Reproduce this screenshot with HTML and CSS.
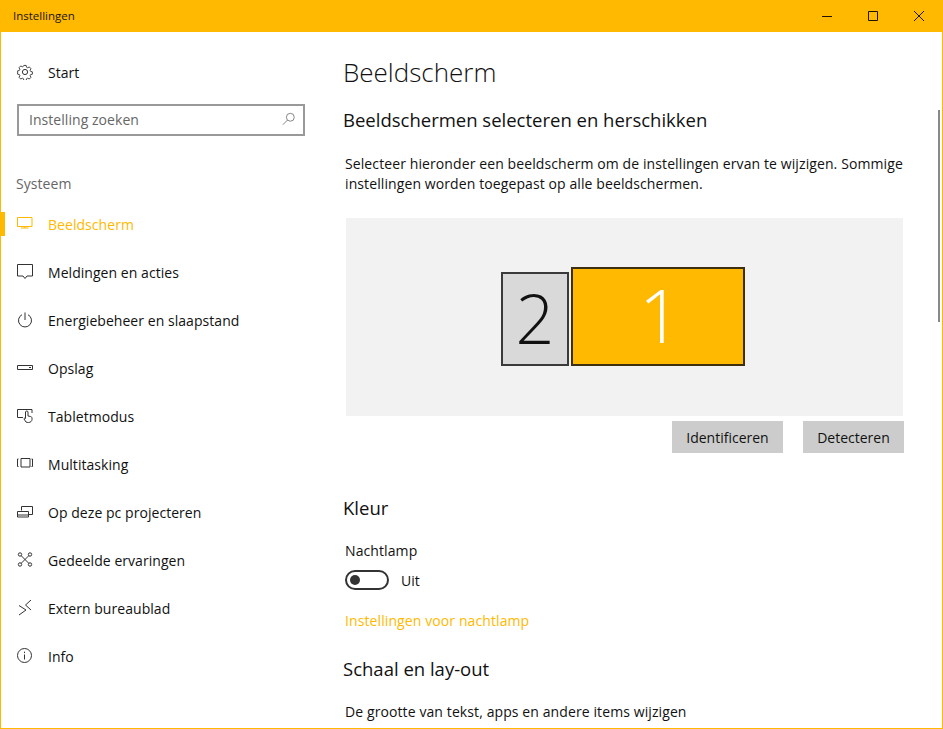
FILE: index.html
```html
<!DOCTYPE html>
<html lang="nl">
<head>
<meta charset="utf-8">
<title>Instellingen</title>
<link rel="stylesheet" href="styles.css">
</head>
<body>
<div class="window">
  <header class="titlebar">
    <span class="title">Instellingen</span>
    <div class="controls">
      <svg class="ctl" viewBox="0 0 46 32"><path d="M18 16.5h10"/></svg>
      <svg class="ctl" viewBox="0 0 46 32"><path d="M18.500 11.500h9v9h-9z"/></svg>
      <svg class="ctl" viewBox="0 0 46 32"><path d="M18 11l10 10M28 11L18 21"/></svg>
    </div>
  </header>
  <div class="content">
    <aside class="sidebar">
      <a class="home">
        <svg class="icon" viewBox="0 0 16 16"><circle cx="8" cy="8" r="2.600"/><path d="M6.700.7h2.600l.4 2 1.200.6 1.900-.9 1.800 1.900-.9 1.800.5 1.200 2 .5v2.600l-2 .5-.5 1.200.9 1.800-1.800 1.900-1.900-.9-1.200.6-.4 2H6.700l-.4-2-1.200-.6-1.900.9-1.800-1.900.9-1.800-.5-1.200-2-.5V6.700l2-.5.5-1.200-.9-1.800 1.800-1.900 1.900.9 1.200-.6z" transform="translate(.8 .8) scale(.9)"/></svg>
        <span>Start</span>
      </a>
      <div class="search">
        <span>Instelling zoeken</span>
        <svg class="search-icon" viewBox="0 0 16 16"><circle cx="9.500" cy="6" r="4.500"/><path d="M6.300 9.200L1 14.500"/></svg>
      </div>
      <div class="group">Systeem</div>
      <nav class="nav">
        <a class="item active">
          <svg class="icon" viewBox="0 0 16 16"><path d="M.5 1.500h14.500v9H.5zM7.750 10.500v1.500M4 12h7.500"/></svg>
          <span>Beeldscherm</span>
        </a>
        <a class="item">
          <svg class="icon" viewBox="0 0 16 16"><path d="M.5.5h15v11.500h-5.500L8 14.500 6 12H.5z"/></svg>
          <span>Meldingen en acties</span>
        </a>
        <a class="item">
          <svg class="icon" viewBox="0 0 16 16"><path d="M8 .5v7.500M5 2.700a6.500 6.500 0 1 0 6 0"/></svg>
          <span>Energiebeheer en slaapstand</span>
        </a>
        <a class="item">
          <svg class="icon" viewBox="0 0 16 16"><path d="M.5 5.500h15v4H.5zM12 7.500h2"/></svg>
          <span>Opslag</span>
        </a>
        <a class="item">
          <svg class="icon" viewBox="0 0 16 16"><path d="M6 9.500H.5v-8h14.500v3.500M9 14l-2-3c0-1 1-1.200 1.500-.5V4c0-1.300 2.500-1.300 2.500 0v4l2.500.5c1 .2 1.500.8 1.500 1.700v1.300c0 1.500-1.500 3-3.500 3-1 0-1.800-.2-2.500-.5z"/></svg>
          <span>Tabletmodus</span>
        </a>
        <a class="item">
          <svg class="icon" viewBox="0 0 16 16"><path d="M4 2.500h9v8.500H4zM1.500 3H.5v7.500h1M14.500 3h1v7.500h-1"/></svg>
          <span>Multitasking</span>
        </a>
        <a class="item">
          <svg class="icon" viewBox="0 0 16 16"><path d="M4.500 6.500V2.500h11v8h-4M.5 7.500h11v5.500H.5zM.5 11h11"/></svg>
          <span>Op deze pc projecteren</span>
        </a>
        <a class="item">
          <svg class="icon" viewBox="0 0 16 16"><circle cx="3" cy="2.500" r="1.700"/><circle cx="13" cy="2.500" r="1.700"/><circle cx="3" cy="12.500" r="1.700"/><circle cx="13" cy="12.500" r="1.700"/><path d="M4.200 3.700l7.600 7.600M11.800 3.700l-7.600 7.600"/></svg>
          <span>Gedeelde ervaringen</span>
        </a>
        <a class="item">
          <svg class="icon" viewBox="0 0 16 16"><path d="M2 5.500l7 4.500-7 5M14 0L8.500 5l5.500 5"/></svg>
          <span>Extern bureaublad</span>
        </a>
        <a class="item">
          <svg class="icon" viewBox="0 0 16 16"><circle cx="7.500" cy="7.500" r="7"/><path d="M7.500 6.500v5M7.500 3.700v1.400"/></svg>
          <span>Info</span>
        </a>
      </nav>
    </aside>
    <main class="main">
      <h1>Beeldscherm</h1>
      <h2 class="sub-first">Beeldschermen selecteren en herschikken</h2>
      <p class="intro">Selecteer hieronder een beeldscherm om de instellingen ervan te wijzigen. Sommige instellingen worden toegepast op alle beeldschermen.</p>
      <div class="panel">
        <div class="mon mon2">2</div>
        <div class="mon mon1">1</div>
      </div>
      <div class="buttons">
        <button class="btn btn-id">Identificeren</button>
        <button class="btn btn-det">Detecteren</button>
      </div>
      <h2 class="kleur">Kleur</h2>
      <div class="label">Nachtlamp</div>
      <div class="toggle-row">
        <span class="toggle"><span class="knob"></span></span>
        <span>Uit</span>
      </div>
      <a class="link">Instellingen voor nachtlamp</a>
      <h2 class="schaal">Schaal en lay-out</h2>
      <div class="label last">De grootte van tekst, apps en andere items wijzigen</div>
    </main>
    <div class="scrollbar"></div>
  </div>
</div>
</body>
</html>
```
FILE: styles.css
```css
* { box-sizing: border-box; }
html, body { margin: 0; padding: 0; height: 729px; overflow: hidden; background: #fff; }
body { font-family: "Open Sans", "Liberation Sans", sans-serif; font-size: 14px; color: #111; }
.window { height: 729px; display: flex; flex-direction: column; border: 1px solid #ffb900; border-top: 0; overflow: hidden; }
.titlebar { height: 32px; flex: none; background: #ffb900; display: flex; align-items: center; justify-content: space-between; padding: 0 1px 0 13px; margin: 0 -1px; }
.title { font-size: 11.5px; color: #201400; position: relative; top: -1px; }
.controls { display: flex; }
.ctl { width: 46px; height: 32px; fill: none; stroke: #201400; stroke-width: 1; display: block; }
.content { flex: 1; display: flex; position: relative; min-height: 0; }
.sidebar { width: 342px; flex: none; letter-spacing: .05px; }
.icon { width: 16px; height: 16px; fill: none; stroke: #333; stroke-width: 1; flex: none; }
.home, .item { display: flex; align-items: center; gap: 15px; padding-left: 16px; }
.home { height: 48px; margin-top: 16px; }
.search { width: 288px; height: 32px; margin: 8px 0 0 16px; border: 2px solid #999; display: flex; align-items: center; justify-content: space-between; padding: 0 7px 2px 10px; color: #666; }
.search-icon { width: 14px; height: 14px; fill: none; stroke: #777; stroke-width: 1; }
.group { margin: 38px 0 0 15px; height: 20px; line-height: 20px; color: #666; }
.nav { margin-top: 6px; }
.item { height: 48px; position: relative; }
.item.active { color: #ffb900; }
.item.active .icon { stroke: #ffb900; }
.item.active::before { content: ""; position: absolute; left: -1px; top: 12px; width: 5px; height: 24px; background: #ffb900; }
.main { flex: 1; min-width: 0; }
h1 { margin: 21px 0 0; font-size: 26px; font-weight: 300; line-height: 38px; height: 38px; color: #111; }
h2 { margin: 0; font-size: 18.5px; font-weight: 400; line-height: 26px; height: 26px; color: #111; }
.sub-first { margin-top: 16px; }
.intro { margin: 21px 0 0 2px; width: 570px; line-height: 20px; letter-spacing: .1px; }
.panel { margin: 24px 0 0 3px; width: 557px; height: 198px; background: #f2f2f2; position: relative; }
.mon { position: absolute; bottom: 50px; border: 2px solid #3a3a3a; display: flex; align-items: center; justify-content: center; font-weight: 300; line-height: 1; }
.mon2 { left: 155px; width: 68px; height: 94px; background: #d9d9d9; color: #111; font-size: 68px; padding-bottom: 3px; }
.mon1 { left: 225px; width: 174px; height: 99px; background: #ffb900; color: #fff; border-color: #3d2f10; font-size: 74px; padding: 0 0 4px 4px; }
.buttons { display: flex; margin: 5px 0 0 329px; gap: 20px; }
.btn { height: 32px; border: 0; background: #ccc; color: #111; font: inherit; padding: 0; }
.btn-id { width: 111px; }
.btn-det { width: 101px; }
.kleur { margin-top: 42px; }
.label { margin: 20px 0 0 2px; line-height: 20px; letter-spacing: .1px; }
.toggle-row { display: flex; align-items: center; gap: 12px; margin: 9px 0 0 2px; height: 20px; }
.toggle { width: 44px; height: 20px; border: 2px solid #333; border-radius: 10px; display: flex; align-items: center; padding-left: 3px; }
.knob { width: 10px; height: 10px; border-radius: 50%; background: #333; }
.link { display: block; margin: 21px 0 0 2px; line-height: 20px; color: #ffb900; letter-spacing: .1px; }
.schaal { margin-top: 25px; }
.label.last { margin-top: 20px; }
.scrollbar { position: absolute; right: 2px; top: 78px; width: 2px; height: 212px; background: #888; }
```
